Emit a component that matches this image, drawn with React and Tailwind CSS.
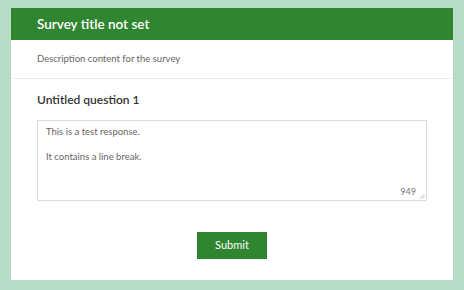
export default function App() {
  return (
    <div className="w-[464px] h-[290px] bg-[#b6dcc8] pt-[8px] pl-[11px] pr-[11px] pb-[10px]" style={{ fontFamily: "Lato, 'Noto Sans', sans-serif" }}>
      <div className="bg-white h-[272px] flex flex-col">
        <div className="h-[32px] bg-[#2f8530] flex items-center pl-[26px]">
          <span className="text-white text-[13.5px] font-semibold">Survey title not set</span>
        </div>
        <div className="h-[39px] flex items-center pl-[26px] border-b border-[#ececec]">
          <span className="text-[#666] text-[9.5px]">Description content for the survey</span>
        </div>
        <div className="px-[26px] pt-[12px]">
          <div className="text-[#333] text-[12px] font-semibold leading-[18px]">Untitled question 1</div>
          <div className="relative mt-[11px] h-[81px] w-[390px] border border-[#dcdcdc] px-[8px] pt-[4px] text-[9.5px] text-[#666] leading-[13px]">
            <div>This is a test response.</div>
            <div className="mt-[12px]">It contains a line break.</div>
            <span className="absolute right-[10px] bottom-[2px] text-[9px] text-[#777]">949</span>
            <svg className="absolute right-[1px] bottom-[1px]" width="6" height="6" viewBox="0 0 6 6">
              <path d="M1 5.5L5.5 1M3.5 5.5L5.5 3.5" stroke="#aaa" strokeWidth="0.8" />
            </svg>
          </div>
          <div className="flex justify-center mt-[31px]">
            <div className="w-[70px] h-[27px] bg-[#2f8530] text-white text-[11px] flex items-center justify-center">Submit</div>
          </div>
        </div>
      </div>
    </div>
  );
}
